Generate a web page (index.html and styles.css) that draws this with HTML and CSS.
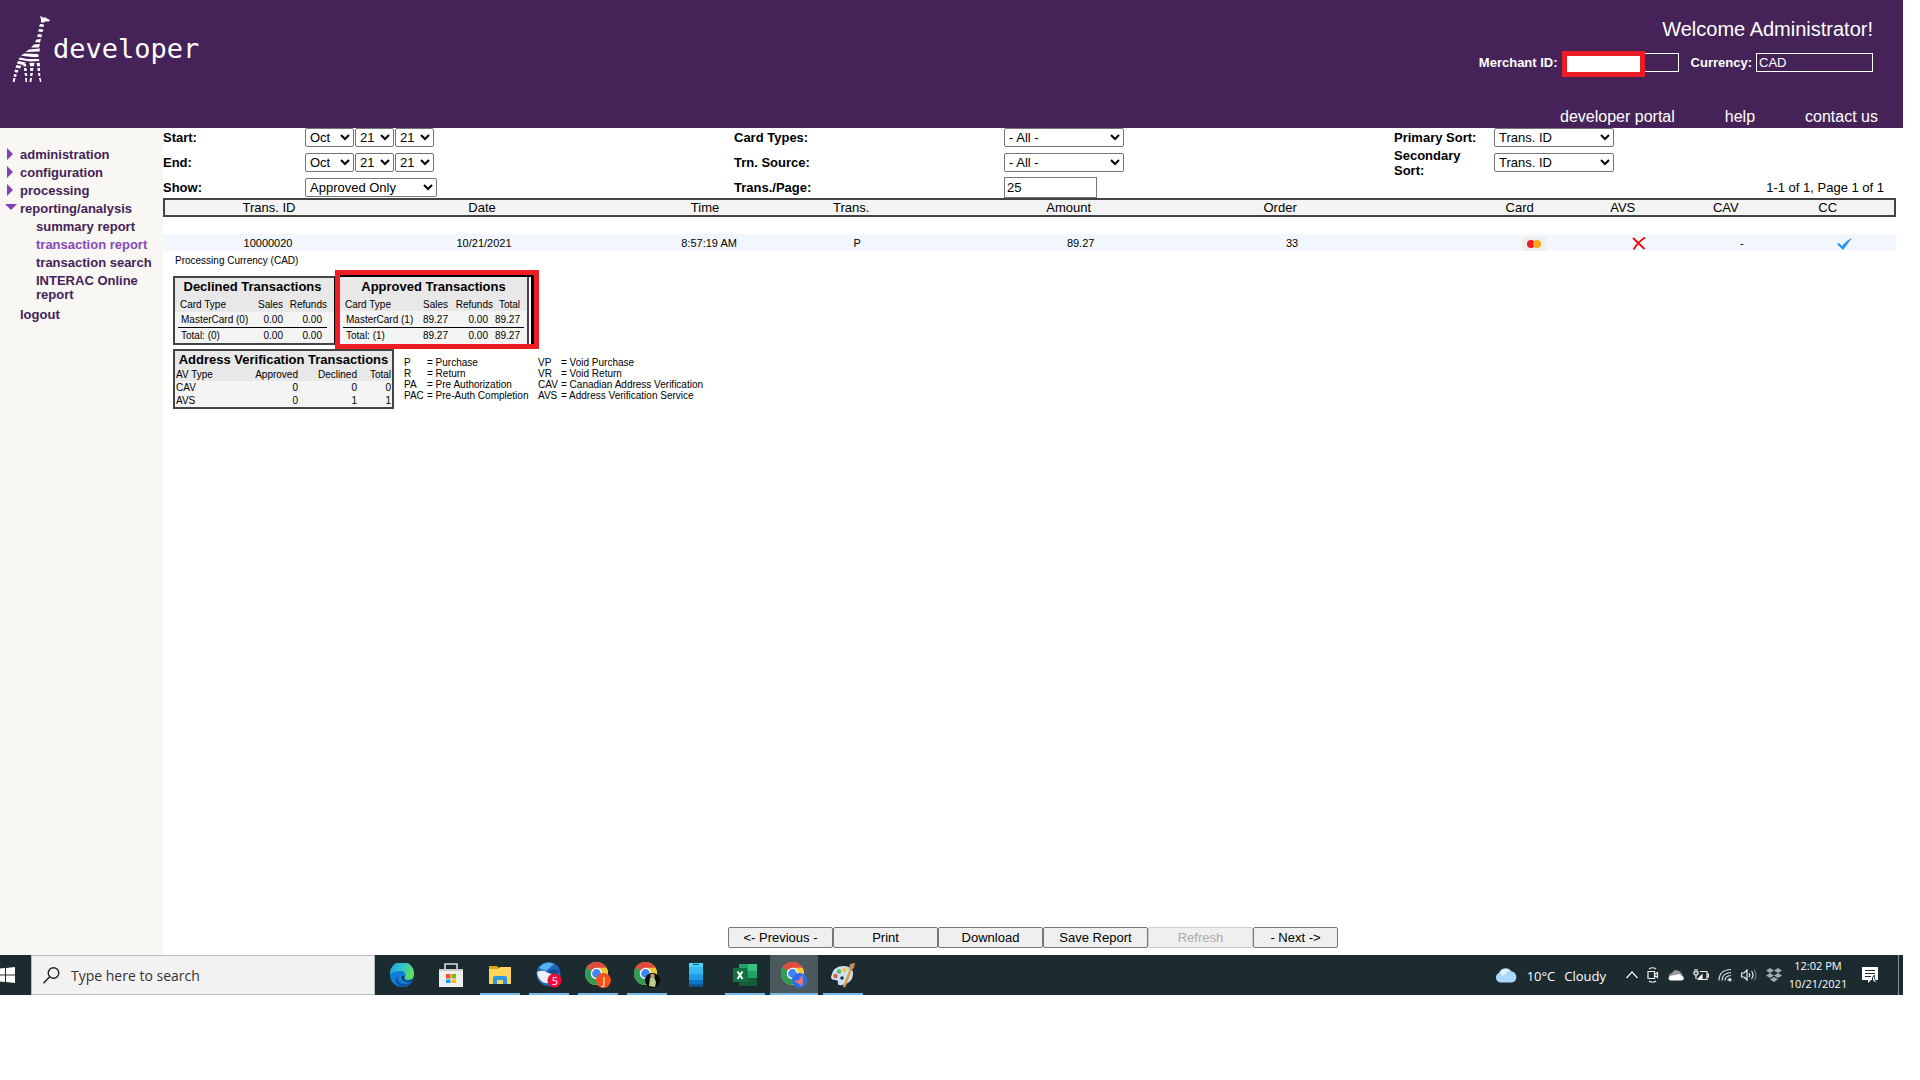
FILE: index.html
```html
<!DOCTYPE html>
<html lang="en">
<head>
<meta charset="utf-8">
<title>Transaction report</title>
<link rel="stylesheet" href="styles.css">
</head>
<body>
<svg width="0" height="0" class="defs" aria-hidden="true">
  <symbol id="chrome" viewBox="0 0 24 24">
    <circle cx="12" cy="12" r="12" fill="#e8c33b"/>
    <path d="M12 12 1.600 6A12 12 0 0 1 22.400 6z" fill="#df4a3e"/>
    <path d="M1.600 6A12 12 0 0 0 12 24l5-9.500-5-2.500z" fill="#2e9c56"/>
    <path d="M12 6h10.400A12 12 0 0 1 12 24l5-9z" fill="#f3c836"/>
    <circle cx="12" cy="12" r="6" fill="#fff"/>
    <circle cx="12" cy="12" r="4.600" fill="#4285f4"/>
  </symbol>
</svg>
<header class="topbar">
  <a class="logo" href="#">
    <svg width="50" height="76" viewBox="0 0 50 76" fill="#fff" aria-hidden="true">
      <path d="M32 6l2 1v-1l1 2 2-1 1 1 4 2-1 1.500h-4l-1 1h-3l0-3z"/>
      <path d="M32 14l4 .5-.5 2.500-4.500-.5zM31 19l4.500.5-1 2.500-4.500-.5zM30 24l4 .5-.7 3-4.300-1zM28.500 29.500l4.500-.5-1 3.500-5-.5zM26 34.500l6-.5-1 3.500-8 0zM21 39.500l11-1-.5 3-14 .5zM16 43.500l14 .5 1 2.500-4 .7-14-1.500zM12 47.500l7 1.500 12 0 .3 2-9 .5-12-2zM10 51l8 1.500-3 2.500-6-1.500z"/>
      <path d="M8.500 55l5 1-1.500 2.500-4.500-1zM7 59.500l3.500.8-1 2.500-3-.7zM6.200 64l2.600.5-.7 2.500-2.500-.5zM5.200 68l2.300.3-1 3.700H4.800z"/>
      <path d="M15 53l3 1 .3 2.500h-2.800zM16 58h2.500l.3 3h-2.500zM16.500 63H19l.2 3h-2.200zM17.200 68h1.800v4h-1.500z"/>
      <path d="M21.500 53l5-.2-.7 3.500H22zM22 58h3.500l-.5 3h-2.700zM22.500 63H25l-.7 3H22zM22 68h2l-.7 4H21.500z"/>
      <path d="M28.500 53l3.300-.2.2 3.400h-3zM29.300 58h2.700v3h-2.300zM30 63h2.200v3H30.500zM31 68h1.800l.5 4H32z"/>
    </svg>
    <span>developer</span>
  </a>
  <div class="account">
    <div class="welcome">Welcome Administrator!</div>
    <div class="account-fields">
      <label for="merchant">Merchant ID:</label>
      <span class="masked"><input id="merchant" type="text" readonly></span>
      <label for="currency" class="second">Currency:</label>
      <input id="currency" type="text" value="CAD" readonly>
    </div>
    <nav class="toplinks"><a href="#">developer portal</a><a href="#">help</a><a href="#">contact us</a></nav>
  </div>
</header>
<div class="layout">
  <nav class="sidebar">
    <a class="closed" href="#">administration</a>
    <a class="closed" href="#">configuration</a>
    <a class="closed" href="#">processing</a>
    <a class="open" href="#">reporting/analysis</a>
    <a class="sub" href="#">summary report</a>
    <a class="sub current" href="#">transaction report</a>
    <a class="sub" href="#">transaction search</a>
    <a class="sub" href="#">INTERAC Online report</a>
    <a class="last" href="#">logout</a>
  </nav>
  <main>
    <form class="filters">
      <label for="sm">Start:</label>
      <div class="dates"><select id="sm" class="month"><option>Oct</option></select><select aria-label="Start day"><option>21</option></select><select aria-label="Start year"><option>21</option></select></div>
      <label for="card">Card Types:</label>
      <select id="card" class="wide"><option>- All -</option></select>
      <label for="ps">Primary Sort:</label>
      <select id="ps" class="wide"><option>Trans. ID</option></select>
      <label for="em">End:</label>
      <div class="dates"><select id="em" class="month"><option>Oct</option></select><select aria-label="End day"><option>21</option></select><select aria-label="End year"><option>21</option></select></div>
      <label for="src">Trn. Source:</label>
      <select id="src" class="wide"><option>- All -</option></select>
      <label for="ss">Secondary Sort:</label>
      <select id="ss" class="wide"><option>Trans. ID</option></select>
      <label for="show">Show:</label>
      <select id="show" class="show"><option>Approved Only</option></select>
      <label for="pp">Trans./Page:</label>
      <input id="pp" type="text" value="25">
      <div class="paging">1-1 of 1, Page 1 of 1</div>
    </form>
    <table class="report">
      <colgroup><col class="c-id"><col class="c-date"><col class="c-time"><col class="c-trans"><col class="c-amount"><col class="c-order"><col class="c-flag"><col class="c-flag"><col class="c-flag"><col></colgroup>
      <thead><tr><th>Trans. ID</th><th>Date</th><th>Time</th><th class="trans">Trans.</th><th>Amount</th><th class="order">Order</th><th>Card</th><th>AVS</th><th>CAV</th><th class="cc">CC</th></tr></thead>
      <tbody>
        <tr><td>10000020</td><td class="s4">10/21/2021</td><td class="s8">8:57:19 AM</td><td class="trans s12">P</td><td class="s24">89.27</td><td class="order s24">33</td>
        <td class="s28"><svg width="24" height="14" viewBox="0 0 24 14" role="img" aria-label="MasterCard"><path fill="#f0eeeb" d="M0 0h24v14H0z"/><circle cx="9" cy="7" r="4" fill="#eb1c26"/><circle cx="15" cy="7" r="4" fill="#f9a51a"/></svg></td>
        <td class="s32"><svg width="14" height="13" viewBox="0 0 14 13" role="img" aria-label="No match"><path d="M1 1 12.500 12M13 .5Q6 5 1.500 12.500" fill="none" stroke="red" stroke-width="1.800"/></svg></td>
        <td class="s32">-</td>
        <td class="cc s32"><svg width="16" height="12" viewBox="0 0 16 12" role="img" aria-label="Match"><path d="M0 6l2-1 3 3Q10 2 15 0L6 12z" fill="#2196f3"/></svg></td></tr>
      </tbody>
    </table>
    <p class="currency-note">Processing Currency (CAD)</p>
    <div class="totals">
      <div class="box declined">
      <table class="summary">
        <caption>Declined Transactions</caption>
        <colgroup><col class="k-label"><col class="k-sales"><col></colgroup>
        <thead><tr><th>Card Type</th><th>Sales</th><th>Refunds</th></tr></thead>
        <tbody><tr><td>MasterCard (0)</td><td>0.00</td><td class="ref">0.00</td></tr></tbody>
        <tfoot><tr><td>Total: (0)</td><td>0.00</td><td class="ref">0.00</td></tr></tfoot>
      </table>
      </div>
      <div class="callout"><div class="box approved">
      <table class="summary">
        <caption>Approved Transactions</caption>
        <colgroup><col class="k-label"><col class="k-sales"><col class="k-refunds"><col></colgroup>
        <thead><tr><th>Card Type</th><th>Sales</th><th>Refunds</th><th class="sum">Total</th></tr></thead>
        <tbody><tr><td>MasterCard (1)</td><td>89.27</td><td class="ref">0.00</td><td class="sum">89.27</td></tr></tbody>
        <tfoot><tr><td>Total: (1)</td><td>89.27</td><td class="ref">0.00</td><td class="sum">89.27</td></tr></tfoot>
      </table>
      </div></div>
    </div>
    <div class="verification">
      <div class="box av-box">
      <table class="av">
        <caption>Address Verification Transactions</caption>
        <colgroup><col class="a-type"><col class="a-approved"><col class="a-declined"><col></colgroup>
        <thead><tr><th>AV Type</th><th>Approved</th><th>Declined</th><th>Total</th></tr></thead>
        <tbody><tr><td>CAV</td><td>0</td><td>0</td><td>0</td></tr><tr><td>AVS</td><td>0</td><td>1</td><td>1</td></tr></tbody>
      </table>
      </div>
      <dl class="legend">
        <dt>P</dt><dd>= Purchase</dd><dt>VP</dt><dd>= Void Purchase</dd>
        <dt>R</dt><dd>= Return</dd><dt>VR</dt><dd>= Void Return</dd>
        <dt>PA</dt><dd>= Pre Authorization</dd><dt>CAV</dt><dd>= Canadian Address Verification</dd>
        <dt>PAC</dt><dd>= Pre-Auth Completion</dd><dt>AVS</dt><dd>= Address Verification Service</dd>
      </dl>
    </div>
    <div class="actions"><button type="button">&lt;- Previous -</button><button type="button">Print</button><button type="button">Download</button><button type="button">Save Report</button><button type="button" disabled>Refresh</button><button type="button" class="next">- Next -&gt;</button></div>
  </main>
</div>
<footer class="taskbar">
  <button class="start" type="button" aria-label="Start"><svg width="15" height="16" viewBox="0 0 15 16" fill="#fff"><path d="M0 1.500 5 1v6.500H0zM6 .9 15 0v7.500H6zM0 8.500h5V15l-5-.6zM6 8.500h9V16l-9-.9z"/></svg></button>
  <label class="search"><svg width="17" height="17" viewBox="0 0 17 17" fill="none" stroke="#222" stroke-width="1.400"><circle cx="10.500" cy="6" r="5.300"/><path d="M6.700 9.800.5 16.300"/></svg><input type="text" placeholder="Type here to search" aria-label="Search"></label>
  <div class="apps">
    <button type="button" aria-label="Edge"><svg width="24" height="24" viewBox="0 0 24 24"><defs><linearGradient id="eg" x1="0" x2="1" y1=".2" y2=".6"><stop stop-color="#1fa0e0"/><stop offset=".5" stop-color="#34c6c8"/><stop offset="1" stop-color="#64e050"/></linearGradient></defs><circle cx="12" cy="12" r="12" fill="#0f7fd8"/><path d="M0 11A12 12 0 0 1 24 10c.6 5-3 7-6.500 6.500-2-.2-3.500-1-2.500-2.500 2-3-1-6-4-6-5 0-9 1-11 3z" fill="url(#eg)"/><path d="M9 10c-4 4-1 11 5 11 4 0 6-1 8-4a12 12 0 0 1-10 7C5 23 4 14 9 10z" fill="#10519f"/><path d="M14 13c-1 3 1 5 4 5 2 0 4-1 5.500-2.500L22 18q-4 2-8 0-3-2-2-5z" fill="#1b2b30"/></svg></button>
    <button type="button" aria-label="Store"><svg width="24" height="24" viewBox="0 0 24 24"><path d="M6 7V1h12v6" fill="none" stroke="#ddd" stroke-width="1.600"/><path d="M0 6h24v18H0z" fill="#eee"/><path d="M0 6h24v2H0z" fill="#ccc"/><path d="M7 11h4.500v4.500H7z" fill="#f25022"/><path d="M12.500 11H17v4.500h-4.500z" fill="#7fba00"/><path d="M7 16.500h4.500V20H7z" fill="#00a4ef"/><path d="M12.500 16.500H17V20h-4.500z" fill="#ffb900"/></svg></button>
    <button type="button" class="running" aria-label="Files"><svg width="24" height="24" viewBox="0 0 24 24"><path d="M1 3h8l2 2h12v16H1z" fill="#e2a30c"/><path d="M1 6h9l2-2h11v17H1z" fill="#ffd35c"/><path d="M5 21v-6q0-2 2-2h10q2 0 2 2v6h-4v-4H9v4z" fill="#2f97e0"/></svg></button>
    <button type="button" class="running" aria-label="Mail"><svg width="26" height="26" viewBox="0 0 26 26"><circle cx="12.500" cy="12" r="12" fill="#1d66b8"/><path d="M3 6Q9-2 18 2L10 9z" fill="#54b4ee"/><path d="M1 10Q8 7 12 11l10-3-2 9q-6 5-11 4Q2 19 1 10z" fill="#eef2f6"/><path d="M12 11q4-6 12-2l-4 4z" fill="#12498f"/><circle cx="18.500" cy="18.500" r="7" fill="#f4083c"/></svg><span class="badge">5</span></button>
    <button type="button" class="running" aria-label="Chrome"><svg width="26" height="26" viewBox="0 0 26 26"><use href="#chrome" width="23" height="23"/><circle cx="18.500" cy="18.500" r="7.500" fill="#f4511e"/></svg><span class="badge">J</span></button>
    <button type="button" class="running" aria-label="Chrome"><svg width="26" height="26" viewBox="0 0 26 26"><use href="#chrome" width="23" height="23"/><circle cx="18.500" cy="18.500" r="7.500" fill="#0b0b08"/><path d="M15 24l1-8 4-1 2 5-1 5z" fill="#b9cc8b"/><circle cx="18.500" cy="14" r="2.300" fill="#b99b78"/></svg></button>
    <button type="button" aria-label="Phone"><svg width="14" height="24" viewBox="0 0 14 24"><path fill="#4dd4fb" d="M0 0h14v5H0z"/><path fill="#35bbf2" d="M0 4h14v8H0z"/><path fill="#1e9de4" d="M0 11h14v6H0z"/><path fill="#0b74c6" d="M0 17h14v7H0z"/><path fill="#125082" d="M0 21.500h14V24H0z"/><path fill="#07527f" d="M4 1h6v1H4z"/></svg></button>
    <button type="button" class="running" aria-label="Excel"><svg width="24" height="24" viewBox="0 0 24 24"><path fill="#21a366" d="M6 1h9v7H6z"/><path fill="#33c481" d="M15 1h9v7h-9z"/><path fill="#107c41" d="M6 8h18v7H6z"/><path fill="#21a366" d="M15 8h9v7h-9z"/><path fill="#185c37" d="M6 15h18v8H6z"/><path fill="#0f7040" d="M0 5h14v14H0z"/><path d="M4.500 8.500l5 7.500M9.500 8.500l-5 7.500" stroke="#fff" stroke-width="2"/></svg></button>
    <button type="button" class="running active" aria-label="Chrome"><svg width="26" height="26" viewBox="0 0 26 26"><use href="#chrome" width="23" height="23"/><circle cx="18.500" cy="18.500" r="7.500" fill="#2f6bea"/><path d="M13 19l5-1 3-5 1 6-1 5-3-2z" fill="#f0776e"/></svg></button>
    <button type="button" class="running" aria-label="Paint"><svg width="26" height="26" viewBox="0 0 26 26"><path d="M1 15Q3 4 13 4q10 0 10 8 0 9-11 11-5 1-4-3 0-2-3-2-4 0-4-3z" fill="#c9e2f2"/><circle cx="5.500" cy="14" r="2.200" fill="#e25b40"/><circle cx="9" cy="9.500" r="2.200" fill="#5cb85c"/><circle cx="14.500" cy="8" r="2.200" fill="#f4c542"/><circle cx="12" cy="16" r="1.800" fill="#234"/><path d="M14 25 21 7" stroke="#e59a45" stroke-width="2.500"/><path d="M19 7l1-5 5-1-1 5-3 2z" fill="#c58a5a"/></svg></button>
  </div>
  <div class="tray">
    <svg width="22" height="16" viewBox="0 0 22 16"><path d="M5 15.500a5 5 0 0 1-1-9.500A7 7 0 0 1 16.500 4.500 5.600 5.600 0 0 1 17 15.500z" fill="#a9d8f8"/><path d="M5 6Q8 0 14 3L8 9z" fill="#e3f3fd"/></svg>
    <span class="weather"><span>10°C</span><span>Cloudy</span></span>
    <span class="status">
    <svg width="12" height="8" viewBox="0 0 12 8" fill="none" stroke="#eee" stroke-width="1.300"><path d="M.5 7 6 1l5.500 6"/></svg>
    <svg width="12" height="16" viewBox="0 0 12 16" fill="none" stroke="#eee" stroke-width="1.200"><path d="M1 4.500h6.500v7H1zM7.500 7.500l3-2v5l-3-2M2 2q3.500-2.500 7 0M2 14q3.500 2.500 7 0"/></svg>
    <svg width="16" height="12" viewBox="0 0 16 12"><path d="M1 8a3.500 3.500 0 0 1 3-4Q6 0 10 1.500 14 3 15 8z" fill="#999"/><path d="M2 11.500Q-1 9 2 7l5-1 4-1 3 2q4 2 0 4.500z" fill="#fff"/></svg>
    <svg width="16" height="12" viewBox="0 0 16 12" fill="none" stroke="#eee" stroke-width="1.200"><path d="M7 2.500h7v8H5M14.500 5h1v3h-1M1 3h4v2Q3 7 1 5zM2 0v3M4 0v3M3 6v4"/><path d="M5 10l4-4v4z" fill="#eee"/></svg>
    <svg width="14" height="14" viewBox="0 0 14 14" fill="none" stroke="#ddd" stroke-width="1.200"><path d="M1 12.500Q1 2 13 1.500M4 12.500Q4 5 13 4.500M7 12.500Q7 8 13 7.500M10 12.500q0-2 3-2"/><circle cx="12" cy="12" r="1" fill="#fff"/></svg>
    <svg width="16" height="12" viewBox="0 0 16 12" fill="none" stroke="#eee" stroke-width="1.200"><path d="M.6 4H3l3-3v10L3 8H.6zM8 4q1.500 2 0 4M10.500 2q3 4 0 8"/><path d="M13 .5q4 5.500 0 11" stroke="#71797b"/></svg>
    <svg width="16" height="14" viewBox="0 0 16 14" fill="#a3a9aa"><path d="M4 0l4 2.500L4 5 0 2.500zM12 0l4 2.500L12 5 8 2.500zM4 5l4 2.500L4 10 0 7.500zM12 5l4 2.500-4 2.500-4-2.500zM8 9l4 2.500L8 14l-4-2.500z"/></svg>
    </span>
    <span class="clock"><span>12:02 PM</span><span>10/21/2021</span></span>
    <svg width="16" height="16" viewBox="0 0 16 16"><path d="M0 0h16v13H9l-3 3v-3H0z" fill="#fff"/><path d="M3 3.500h10M3 6.500h10M3 9.500h6" stroke="#1b2b30" stroke-width="1.200"/><path d="M12.500 8q-3 2-2 5t5 2q-4-2-3-7z" fill="#fff" stroke="#1b2b30"/></svg>
  </div>
</footer>
</body>
</html>
```
FILE: styles.css
```css
*, *::before, *::after { box-sizing: border-box; }
body {
  margin: 0;
  padding: 0 17px 85px 0;
  min-height: 100vh;
  display: flex;
  flex-direction: column;
  background: #fff;
  color: #000;
  font: 13px/15px "Liberation Sans", Arial, sans-serif;
}
.defs { position: absolute; }
a { color: inherit; text-decoration: none; }
input, select, button { font: inherit; color: inherit; margin: 0; }

.topbar {
  display: flex;
  justify-content: space-between;
  height: 128px;
  padding: 10px 25px 0 8px;
  background: #452358;
  color: #fff;
}
.logo { display: flex; height: 76px; font: 27px/78px "DejaVu Sans Mono", monospace; }
.logo span { margin-left: -5px; }
.account { display: flex; flex-direction: column; align-items: flex-end; }
.welcome { padding: 8px 5px 0 0; font-size: 20px; line-height: 23px; }
.account-fields { display: flex; align-items: center; gap: 4px; padding: 12px 5px 0 0; font-weight: bold; }
.account-fields .second { margin-left: 8px; }
.account-fields input {
  display: block;
  width: 117px;
  height: 19px;
  padding: 0 2px;
  border: 1px solid #fff;
  background: transparent;
  font-weight: normal;
}
.masked { position: relative; }
.masked::after {
  content: "";
  position: absolute;
  top: -2px;
  left: 0;
  width: 83px;
  height: 26px;
  border: 5px solid #ee1c24;
  background: #fff;
}
.toplinks { display: flex; gap: 50px; margin-top: auto; font-size: 16px; line-height: 22px; }

.layout { display: flex; flex: 1; }
.sidebar {
  display: flex;
  flex-direction: column;
  flex: none;
  width: 163px;
  padding: 18px 8px 0 0;
  background: #f8f7f3;
  color: #452358;
  font-weight: bold;
  line-height: 14px;
}
.sidebar a { display: flex; padding: 2px 0 2px 20px; }
.sidebar .sub { padding-left: 36px; }
.sidebar .current { color: #8649b8; }
.sidebar .last { margin-top: 2px; }
.sidebar .closed, .sidebar .open { padding-left: 0; }
.closed::before, .open::before { content: ""; flex: none; width: 0; height: 0; }
.closed::before { margin: 0 7px 0; border: 6px solid transparent; border-left-color: #8340b5; border-right-width: 0; }
.open::before { margin: 2px 3px 0 5px; border: 6px solid transparent; border-top-color: #8340b5; border-bottom-width: 0; }

main { display: flex; flex-direction: column; flex: 1; min-width: 0; }
.filters {
  display: grid;
  grid-template-columns: 142fr 429fr 270fr 390fr 100fr 409fr;
  grid-template-rows: repeat(3, 19px);
  row-gap: 6px;
  align-items: center;
  padding-bottom: 1px;
}
.filters label { font-weight: bold; }
.filters select { height: 19px; padding: 0; border: 1px solid #767676; border-radius: 2px; background-color: #fff; width: 39px; }
.filters .dates { display: flex; gap: 1px; }
.filters .month { width: 49px; }
.filters .show { width: 132px; }
.filters .wide { width: 120px; }
.filters input { width: 93px; height: 21px; padding: 0 2px; border: 1px solid #767676; }
.paging { grid-column: 5 / 7; padding-right: 19px; text-align: right; }

.report { width: calc(100% - 7px); table-layout: fixed; border-collapse: separate; border-spacing: 0; text-align: center; }
.c-id { width: 12.120%; }
.c-date { width: 12.580%; }
.c-time { width: 13.160%; }
.c-trans { width: 8.140%; }
.c-amount { width: 12.520%; }
.c-order { width: 16.790%; }
.c-flag { width: 5.950%; }
.report th { height: 19px; padding: 0; border: solid #444; border-width: 2px 0; background: #f4f4f4; font-weight: normal; }
.report th:first-child { border-left-width: 2px; }
.report th:last-child { border-right-width: 2px; }
.report tbody::before { content: ""; display: table-row; height: 17px; }
.report td { height: 17px; padding: 1px 0 0; background: #f1f7fc; font-size: 11px; }
.report td svg { display: inline-block; vertical-align: middle; }
.report .trans { padding-right: 77px; }
.report .order { padding-right: 85px; }
.report .cc { padding-right: 16px; }
.report .s4 { padding-left: 4px; }
.report .s8 { padding-left: 8px; }
.report .s12 { padding-left: 12px; }
.report .s24 { padding-left: 24px; }
.report .s28 { padding-left: 28px; }
.report .s32 { padding-left: 32px; }

.currency-note { margin: 3px 0 0 12px; font-size: 10px; line-height: 14px; }
.totals { display: flex; align-items: flex-start; padding: 2px 0 0 10px; }
.box { border: 2px solid #444; background: linear-gradient(#e8e8e8 34px, #f4f4f4 34px); background-origin: padding-box; }
.summary, .av { width: 100%; border-spacing: 0; table-layout: fixed; font-size: 10px; line-height: 13px; text-align: right; white-space: nowrap; }
caption { font-size: 13px; font-weight: bold; white-space: nowrap; }
.summary caption { height: 19px; line-height: 17px; }
.summary th, .av th { padding: 0; font-weight: normal; }
.summary td, .av td { padding: 0; }
.summary th:first-child, .summary td:first-child, .av th:first-child, .av td:first-child { text-align: left; }
.summary th, .summary td { height: 15px; }
.summary th:first-child { padding-left: 2px; }
.summary td:first-child { padding-left: 3px; }
.summary .ref { padding-right: 5px; }
.summary .sum { padding-right: 4px; }
.summary tfoot td { height: 16px; border-top: 1px solid #000; }
.k-label { width: 72px; }
.k-sales { width: 33px; }
.k-refunds { width: 45px; }
.declined { width: 162px; margin-top: 6px; padding: 0 7px 0 3px; border-right: 1px solid #000; }
.callout { width: 204px; height: 79px; padding-top: 2px; border: 5px solid #ee1c24; background: #000; }
.approved { width: 189px; height: 67px; padding: 1px 3px 0; border-width: 0 2px 0 0; box-shadow: 2px 0 #fff; }

.verification { display: flex; align-items: flex-start; gap: 10px; padding-left: 10px; }
.av-box { width: 221px; padding: 0 1px; background: linear-gradient(#e8e8e8 30px, #f4f4f4 30px); }
.av caption { height: 17px; line-height: 17px; }
.a-type { width: 61px; }
.a-approved { width: 61px; }
.a-declined { width: 59px; }
.legend { display: grid; grid-template-columns: 23px 111px 23px auto; align-content: start; margin: 0; padding-top: 8px; font-size: 10px; line-height: 11px; }
.legend dd { margin: 0; }

.actions { display: flex; justify-content: center; margin-top: auto; padding-bottom: 7px; }
.actions button { width: 105px; height: 21px; padding: 0; border: 1px solid #767676; border-radius: 2px; background: #efefef; }
.actions .next { width: 85px; }
.actions button:disabled { border-color: #ccc; color: #aaa; }

.taskbar { display: flex; height: 40px; background: #1b2b30; color: #fff; font-family: "Open Sans", "Noto Sans", sans-serif; }
.taskbar svg { display: block; flex: none; }
.taskbar button { display: flex; align-items: center; justify-content: center; padding: 0; border: 0; background: none; }
.taskbar .start { width: 31px; justify-content: flex-start; }
.search { display: flex; align-items: center; gap: 9px; width: 344px; padding: 0 11px; border: 1px solid #bbb; background: #f2f2f2; color: #333; }
.search input { flex: 1; min-width: 0; border: 0; padding: 1px 2px 0; background: transparent; font-size: 14px; line-height: 20px; }
.search input::placeholder { color: #333; opacity: 1; }
.apps { display: flex; gap: 1px; padding-left: 3px; }
.taskbar .apps button { position: relative; width: 48px; }
.apps .running::after { content: ""; position: absolute; bottom: 0; left: 4px; right: 4px; height: 2px; background: #76b9ed; }
.apps .active { background: #4b585c; }
.taskbar .apps .active::after { left: 0; right: 0; }
.badge { position: absolute; left: 23px; top: 18px; width: 14px; font-size: 11px; line-height: 16px; text-align: center; color: #fff; }
.tray { display: flex; align-items: center; margin-left: auto; padding-right: 20px; margin-right: 4px; border-right: 1px solid #899194; }
.weather { display: flex; gap: 9px; margin: 2px 20px 0 10px; font-size: 13px; line-height: 18px; }
.status { display: flex; align-items: center; gap: 9px; }
.clock { display: flex; flex-direction: column; align-items: center; width: 72px; margin-right: 8px; font-size: 11px; line-height: 18px; }
```
